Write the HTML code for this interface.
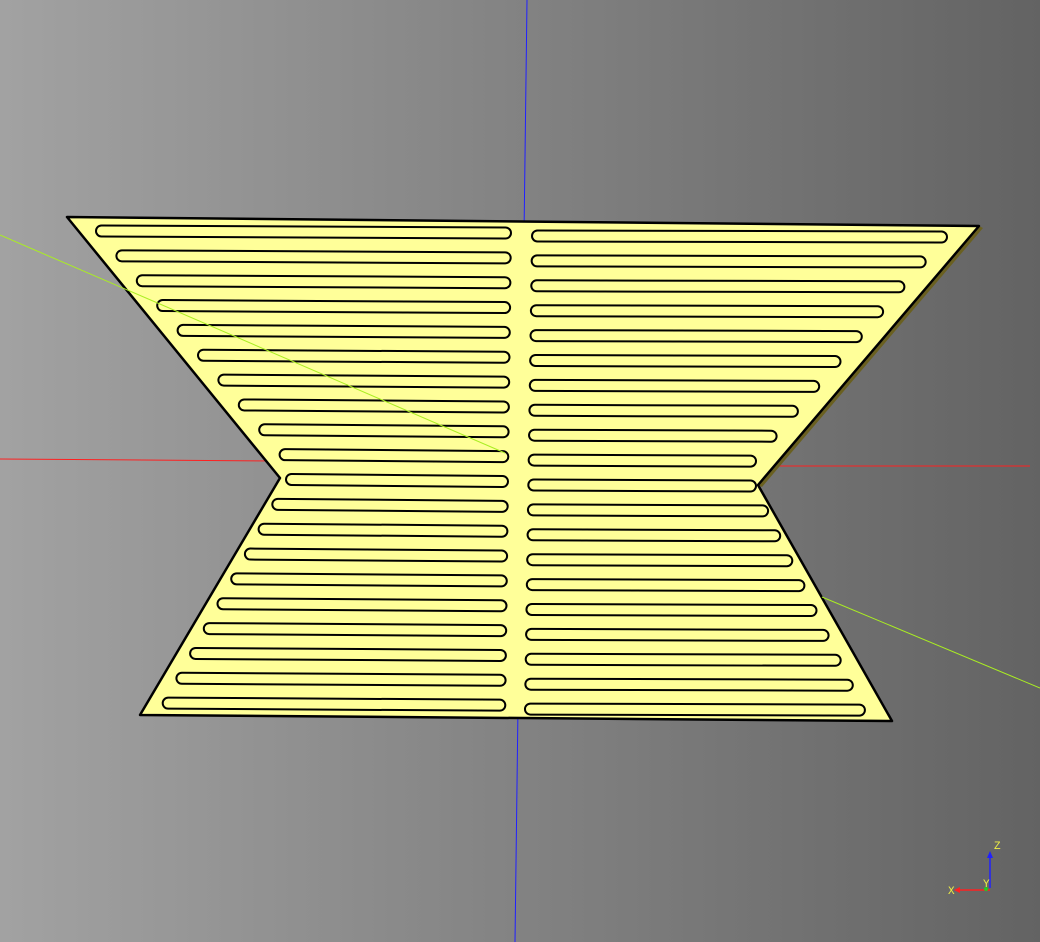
<!DOCTYPE html>
<html><head><style>html,body{margin:0;padding:0;}body{width:1040px;height:942px;overflow:hidden;background:linear-gradient(to right,#a2a2a2,#636363);}</style></head>
<body>
<svg width="1040" height="942" viewBox="0 0 1040 942" xmlns="http://www.w3.org/2000/svg" style="position:absolute;left:0;top:0">
<line x1="527" y1="0" x2="515" y2="942" stroke="#2020ff" stroke-width="1"/>
<line x1="0" y1="459" x2="280" y2="461" stroke="#ff2020" stroke-width="1"/>
<line x1="760" y1="466" x2="1030" y2="466" stroke="#ff2020" stroke-width="1"/>
<polygon points="758,485 979,226 983,228 762,487" fill="#6a6020"/>
<polygon points="67,217 979,226 758,485 892,721 140,715 280,478" fill="#ffff99" stroke="#000" stroke-width="2.5" stroke-linejoin="round"/>
<g id="slots" stroke-linecap="round" fill="none"></g>
<line x1="0" y1="235" x2="505" y2="453" stroke="#aaee22" stroke-width="1"/>
<line x1="822" y1="597" x2="1040" y2="688" stroke="#aaee22" stroke-width="1"/>
<line x1="990" y1="888" x2="990" y2="856" stroke="#2020ff" stroke-width="1.5"/>
<polygon points="987,858 993,858 990,851" fill="#2020ff"/>
<line x1="990" y1="890" x2="958" y2="890" stroke="#ff2020" stroke-width="1.5"/>
<polygon points="960,887 960,893 954,890" fill="#ff2020"/>
<circle cx="986" cy="889" r="2" fill="#22cc22"/>
<text x="994" y="849" font-family="Liberation Mono, monospace" font-size="11" fill="#eeee44">Z</text>
<text x="983" y="887" font-family="Liberation Mono, monospace" font-size="11" fill="#eeee44">Y</text>
<text x="948" y="894" font-family="Liberation Mono, monospace" font-size="11" fill="#eeee44">X</text>
</svg>
<script>
var g=document.getElementById('slots'),s='';
function slot(x1,y1,x2,y2){s+='<line x1="'+x1+'" y1="'+y1+'" x2="'+x2+'" y2="'+y2+'" stroke="#000" stroke-width="13"/>'+'<line x1="'+x1+'" y1="'+y1+'" x2="'+x2+'" y2="'+y2+'" stroke="#ffff99" stroke-width="9"/>';}
for(var i=0;i<20;i++){
 var y=231+24.85*i, xl=(i<10?95+20.4*i:285-13.7*(i-10))+6.5, xr=512-0.3*i-6.5;
 slot(xl,y,xr,y+2);
 var y2=236+24.9*i, a=531-0.37*i+6.5, b=(i<=8?948-21.3*i:(i<=10?757:757+12.1*(i-10)))-6.5;
 slot(a,y2,b,y2+1);
}
g.innerHTML=s;
</script>
</body></html>
